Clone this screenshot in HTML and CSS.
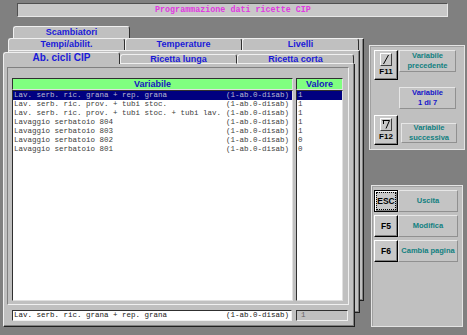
FILE: index.html
```html
<!DOCTYPE html>
<html lang="it">
<head>
  <meta charset="UTF-8">
  <title>Programmazione dati ricette CIP</title>
  <link rel="stylesheet" href="styles.css">
</head>
<body>
  <div class="screen">
    <div class="title-bar">Programmazione dati ricette CIP</div>

    <div class="main">
      <!-- stacked tab pages -->
      <div class="deck">
        <div class="page page-1">
          <div class="tab-row">
            <div class="tab">Scambiatori</div>
          </div>
          <div class="page-body"></div>
        </div>

        <div class="page page-2">
          <div class="tab-row">
            <div class="tab">Tempi/abilit.</div>
            <div class="tab">Temperature</div>
            <div class="tab">Livelli</div>
          </div>
          <div class="page-body"></div>
        </div>

        <div class="page page-front">
          <div class="tab-row">
            <div class="tab active">Ab. cicli CIP</div>
            <div class="tab">Ricetta lunga</div>
            <div class="tab">Ricetta corta</div>
          </div>
          <div class="page-body">
            <div class="table-frame">
              <div class="col">
                <div class="col-head">Variabile</div>
                <div class="col-list">
                  <div class="row selected"><span>Lav. serb. ric. grana + rep. grana</span><span>(1-ab.0-disab)</span></div>
                  <div class="row"><span>Lav. serb. ric. prov. + tubi stoc.</span><span>(1-ab.0-disab)</span></div>
                  <div class="row"><span>Lav. serb. ric. prov. + tubi stoc. + tubi lav.</span><span>(1-ab.0-disab)</span></div>
                  <div class="row"><span>Lavaggio serbatoio 804</span><span>(1-ab.0-disab)</span></div>
                  <div class="row"><span>Lavaggio serbatoio 803</span><span>(1-ab.0-disab)</span></div>
                  <div class="row"><span>Lavaggio serbatoio 802</span><span>(1-ab.0-disab)</span></div>
                  <div class="row"><span>Lavaggio serbatoio 801</span><span>(1-ab.0-disab)</span></div>
                </div>
              </div>
              <div class="col">
                <div class="col-head">Valore</div>
                <div class="col-list">
                  <div class="row selected"><span>1</span></div>
                  <div class="row"><span>1</span></div>
                  <div class="row"><span>1</span></div>
                  <div class="row"><span>1</span></div>
                  <div class="row"><span>1</span></div>
                  <div class="row"><span>0</span></div>
                  <div class="row"><span>0</span></div>
                </div>
              </div>
            </div>

            <div class="edit-row">
              <div class="edit-var"><span>Lav. serb. ric. grana + rep. grana</span><span>(1-ab.0-disab)</span></div>
              <div class="edit-val">1</div>
            </div>
          </div>
        </div>
      </div>

      <!-- function keys -->
      <div class="side">
        <div class="group group-nav">
          <div class="fkey tall">
            <div class="key-icon">
              <svg width="10" height="11" viewBox="0 0 10 11"><path d="M2.5 10L7.5 1" stroke="#000" stroke-width="1" fill="none"/></svg>
            </div>
            <span>F11</span>
          </div>
          <div class="label">Variabile<br>precedente</div>

          <div class="label info">Variabile<br>1 di 7</div>

          <div class="fkey tall">
            <div class="key-icon">
              <svg width="10" height="11" viewBox="0 0 10 11"><path d="M1.5 1.5H8.5L5 9.5M2.5 1.5V5" stroke="#000" stroke-width="1" fill="none"/></svg>
            </div>
            <span>F12</span>
          </div>
          <div class="label low">Variabile<br>successiva</div>
        </div>

        <div class="group group-keys">
          <div class="fkey default"><span class="focus">ESC</span></div>
          <div class="label">Uscita</div>
          <div class="fkey">F5</div>
          <div class="label">Modifica</div>
          <div class="fkey">F6</div>
          <div class="label">Cambia pagina</div>
        </div>
      </div>
    </div>
  </div>
</body>
</html>
```

FILE: styles.css
```css
* {
  box-sizing: border-box;
}

body {
  margin: 0;
  width: 467px;
  height: 335px;
  overflow: hidden;
  background-color: #808080;
  font-family: "Liberation Sans", Arial, sans-serif;
}

.screen {
  padding-top: 3px;
}

.title-bar {
  margin: 0 19px 0 17px;
  height: 14px;
  padding-left: 137px;
  background-color: #c8c8c8;
  border: 1px solid;
  border-color: #505050 #e8e8e8 #e8e8e8 #505050;
  font-family: "Liberation Mono", monospace;
  font-size: 8.4px;
  font-weight: bold;
  line-height: 12px;
  color: #e03ae0;
}

.main {
  display: flex;
  align-items: flex-start;
  margin-top: 9px;
}

/* tab pages */
.deck {
  display: grid;
  width: 361px;
  height: 301px;
  margin-left: 3px;
}

.page {
  grid-area: 1 / 1;
  width: 352px;
  height: 275px;
  display: flex;
  flex-direction: column;
}

.page-1 {
  margin-left: 10px;
  width: 351px;
}

.page-2 {
  margin-left: 5px;
  margin-top: 12px;
}

.page-front {
  margin-top: 26px;
}

.tab-row {
  display: flex;
  align-items: flex-end;
  height: 12px;
}

.tab {
  width: 117px;
  height: 12px;
  background-color: #c0c0c0;
  border: 1px solid;
  border-color: #f0f0f0 #303030 transparent #f0f0f0;
  border-bottom: none;
  border-radius: 3px 3px 0 0;
  text-align: center;
  font-size: 9px;
  font-weight: bold;
  line-height: 10px;
  color: #1a1ad8;
}

.page-front .tab {
  height: 10px;
  line-height: 8px;
  border-bottom: 1px solid #f0f0f0;
}

.page-front .tab.active {
  height: 12px;
  line-height: 10px;
  font-size: 10px;
  border-bottom: none;
}

.page-body {
  flex: 1;
  background-color: #c0c0c0;
  border: 1px solid;
  border-color: #f0f0f0 #202020 #202020 #f0f0f0;
  box-shadow: inset -1px -1px 0 #808080;
}

.page-front .page-body {
  border-top: none;
  display: flex;
  flex-direction: column;
}

.table-frame {
  display: grid;
  grid-template-columns: 281px 47px;
  column-gap: 3px;
  width: 342px;
  height: 238px;
  margin: 3px 0 0 3px;
  padding: 10px 5px 3px 4px;
  border: 1px solid;
  border-color: #808080 #f0f0f0 #f0f0f0 #808080;
}

.col {
  display: flex;
  flex-direction: column;
}

.col-head {
  height: 12px;
  background-color: #80ff80;
  border: 1px solid;
  border-color: #303030 #e0e0e0 #e0e0e0 #303030;
  text-align: center;
  font-size: 9px;
  font-weight: bold;
  line-height: 10px;
  color: #1414c0;
}

.col-list {
  flex: 1;
  background-color: #fff;
  border: 1px solid;
  border-color: #303030 #e0e0e0 #e0e0e0 #303030;
}

.row {
  display: flex;
  justify-content: space-between;
  height: 9px;
  padding: 0 3px 0 1px;
  font-family: "Liberation Mono", monospace;
  font-size: 7.5px;
  line-height: 9px;
  white-space: pre;
  color: #404040;
}

.row.selected {
  background-color: #000080;
  color: #b8b8d0;
}

.edit-row {
  display: flex;
  gap: 4px;
  margin: 5px 0 0 8px;
  height: 11px;
}

.edit-var,
.edit-val {
  border: 1px solid;
  border-color: #303030 #f0f0f0 #f0f0f0 #303030;
  font-family: "Liberation Mono", monospace;
  font-size: 7.5px;
  line-height: 9px;
  white-space: pre;
}

.edit-var {
  display: flex;
  justify-content: space-between;
  width: 280px;
  padding: 0 2px 0 1px;
  background-color: #fff;
  color: #202020;
}

.edit-val {
  width: 52px;
  padding-left: 4px;
  background-color: #c0c0c0;
  color: #606060;
}

/* right side */
.side {
  width: 96px;
  margin-left: 5px;
}

.group {
  background-color: #c0c0c0;
  border: 1px solid #e4e4e4;
  box-shadow: inset 1px 1px 0 #a0a0a0;
}

.group-nav {
  display: grid;
  grid-template-columns: 24px 57px;
  grid-template-rows: 30px 21px 30px;
  column-gap: 1px;
  row-gap: 7px;
  height: 105px;
  margin-top: 19px;
  padding: 4px;
}

.group-nav .info {
  grid-column: 2;
  color: #1414c8;
}

.group-nav .label {
  height: 22px;
}

.group-nav .label.low {
  align-self: end;
  height: 20px;
  margin: 0 -1px 2px 2px;
}

.group-keys {
  display: grid;
  grid-template-columns: 24px 60px;
  grid-auto-rows: 22px;
  row-gap: 3px;
  height: 142px;
  margin: 35px 2px 0 2px;
  padding: 4px 2px;
  align-content: start;
}

.fkey {
  display: flex;
  align-items: center;
  justify-content: center;
  background-color: #c8c8c8;
  border: 1px solid;
  border-color: #fff #000 #000 #fff;
  box-shadow: inset -1px -1px 0 #808080;
  font-size: 8.5px;
  font-weight: bold;
  color: #000;
}

.fkey.default {
  border-color: #000;
  box-shadow: inset 1px 1px 0 #fff, inset -1px -1px 0 #808080;
}

.fkey .focus {
  padding: 3px 0;
  outline: 1px dotted #000;
}

.fkey.tall {
  flex-direction: column;
  justify-content: flex-start;
  padding-top: 2px;
  font-size: 8px;
}

.fkey.tall span {
  margin-top: 1px;
}

.key-icon {
  display: flex;
  align-items: center;
  justify-content: center;
  width: 12px;
  height: 13px;
  background-color: #c8c8c8;
  border: 1px solid;
  border-color: #fff #404040 #404040 #fff;
}

.label {
  display: flex;
  align-items: center;
  justify-content: center;
  text-align: center;
  background-color: #c4c4c4;
  border: 1px solid;
  border-color: #e6e6e6 #909090 #909090 #e6e6e6;
  font-size: 7.5px;
  font-weight: bold;
  line-height: 10px;
  color: #108080;
}
```
